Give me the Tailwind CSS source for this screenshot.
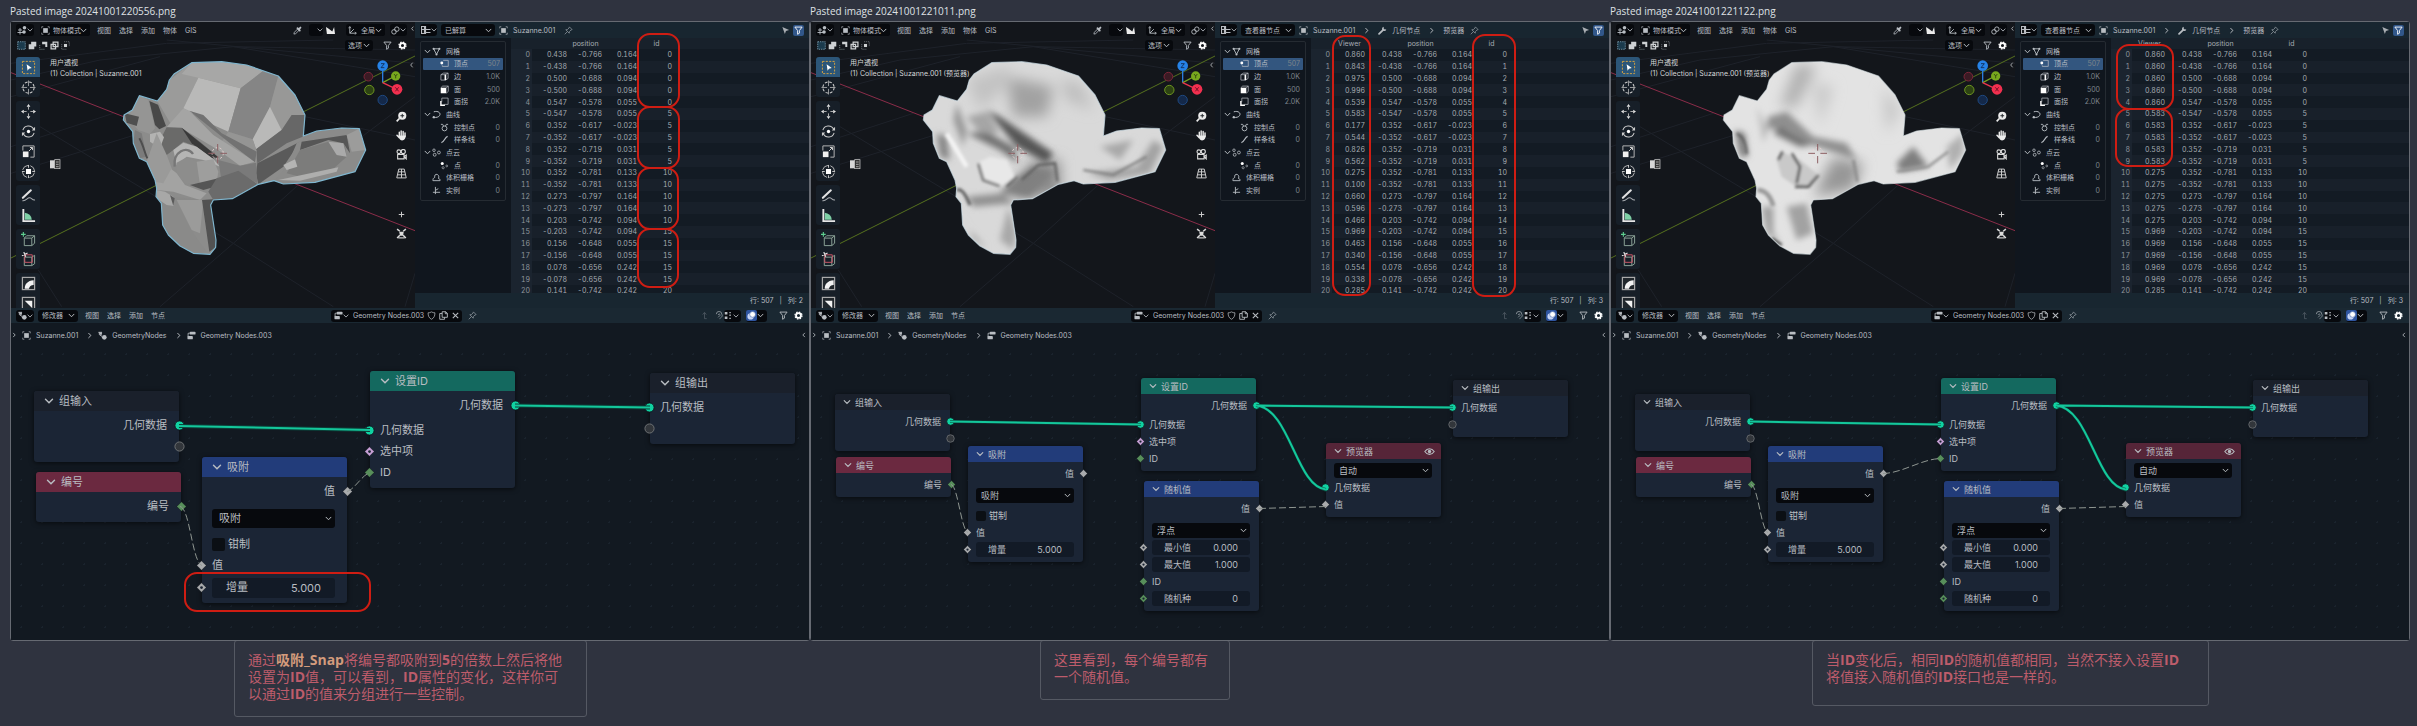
<!DOCTYPE html>
<html lang="zh-CN">
<head>
<meta charset="utf-8">
<title>Canvas</title>
<script src="https://cdn.jsdelivr.net/npm/@tailwindcss/browser@4"></script>
</head>
<body class="min-h-screen overflow-x-hidden bg-[#2f333f] font-['Inter','Noto_Sans_CJK_SC',sans-serif] text-[#b9bec4]">

<svg class="absolute size-0" aria-hidden="true">
  <defs>
    <symbol id="chev" viewBox="0 0 10 10"><path d="M1.5 3.2 5 6.8l3.500-3.600" fill="none" stroke="currentColor" stroke-width="1.400" stroke-linecap="round"/></symbol>
    <symbol id="right" viewBox="0 0 10 10"><path d="M3.500 1.500 7 5 3.500 8.500" fill="none" stroke="currentColor" stroke-width="1.400"/></symbol>
    <symbol id="left" viewBox="0 0 10 10"><path d="M6.500 1.500 3 5l3.500 3.500" fill="none" stroke="currentColor" stroke-width="1.400"/></symbol>
    <symbol id="obj" viewBox="0 0 10 10"><rect x="2.400" y="2.400" width="5.200" height="5.200" fill="currentColor"/><path d="M.8 2.600V.8h1.800M7.400.8h1.800v1.800M9.200 7.400v1.800H7.400M2.600 9.200H.8V7.400" fill="none" stroke="currentColor" stroke-width=".7"/></symbol>
    <symbol id="view3d" viewBox="0 0 10 10"><path d="M.5 7.500h6M3 9.500V3M1 5h4" stroke="currentColor" stroke-width=".9"/><circle cx="7.500" cy="2.800" r="1.800" fill="currentColor"/><circle cx="7" cy="7" r="1.800" fill="currentColor"/></symbol>
    <symbol id="sheet" viewBox="0 0 10 10"><path d="M.5 1.500h3v7h-3zM.5 4.500h9M4.500 1v8M4.500 7.500h5" fill="none" stroke="currentColor" stroke-width="1.200"/></symbol>
    <symbol id="mod" viewBox="0 0 10 10"><path d="M.5 1.500h4M1.500 1.500v2.500l3 2" fill="none" stroke="currentColor" stroke-width="1.100"/><circle cx="3.200" cy="3" r="1.300" fill="currentColor"/><circle cx="7" cy="7" r="2.600" fill="currentColor"/></symbol>
    <symbol id="nodes" viewBox="0 0 10 10"><rect x="3" y=".8" width="6.500" height="3.200" rx="1" fill="currentColor"/><rect x=".5" y="5.500" width="6" height="3.800" rx="1" fill="currentColor"/><path d="M3 2.500H1.200v4" fill="none" stroke="currentColor" stroke-width=".9"/></symbol>
    <symbol id="pin" viewBox="0 0 10 10"><path d="M6 1l3 3-1.200.4L6 6.200l-.2 1.800L2 4.200l1.800-.2 1.800-1.800zM3.800 6.200.8 9.200" fill="none" stroke="currentColor" stroke-width=".9"/></symbol>
    <symbol id="funnel" viewBox="0 0 10 10"><path d="M1 1.200h8L6 5v3L4 9.200V5z" fill="none" stroke="currentColor" stroke-width="1" stroke-linejoin="round"/></symbol>
    <symbol id="gear" viewBox="0 0 10 10"><circle cx="5" cy="5" r="2.700" fill="none" stroke="currentColor" stroke-width="2"/><circle cx="5" cy="5" r="3.900" fill="none" stroke="currentColor" stroke-width="1.400" stroke-dasharray="1.600 1.460"/></symbol>
    <symbol id="shield" viewBox="0 0 10 10"><path d="M5 1c1.300.8 2.500 1 3.800 1 0 3.500-1 5.800-3.800 7.200C2.200 7.800 1.200 5.500 1.200 2 2.500 2 3.700 1.800 5 1z" fill="none" stroke="currentColor" stroke-width=".8"/></symbol>
    <symbol id="copy" viewBox="0 0 10 10"><path d="M3.500.8h4l1.800 1.800v4.400H3.500zM3.500 2.800H.8v6.400h5.400V7" fill="none" stroke="currentColor" stroke-width="1"/><path d="M7 .8v2.200h2.300" fill="none" stroke="currentColor"/></symbol>
    <symbol id="x" viewBox="0 0 10 10"><path d="M2 2l6 6M8 2 2 8" stroke="currentColor" stroke-width="1.200"/></symbol>
    <symbol id="eye" viewBox="0 0 12 10"><path d="M.8 5C3.500.8 8.500.8 11.200 5 8.500 9.200 3.500 9.200.8 5z" fill="none" stroke="currentColor" stroke-width="1.200"/><circle cx="6" cy="5" r="1.900" fill="currentColor"/></symbol>
    <symbol id="wrench" viewBox="0 0 10 10"><path d="M1.200 8.800 5.500 4.500" stroke="currentColor" stroke-width="2" stroke-linecap="round"/><path d="M9.200 3.500A2.400 2.400 0 1 1 6.500.8L6.200 2.500l1.300 1.300z" fill="currentColor"/></symbol>
    <symbol id="cursor" viewBox="0 0 10 10"><path d="M1.500 1 9 4.500 5.500 5.600 4.300 9z" fill="currentColor"/></symbol>
    <symbol id="drop" viewBox="0 0 10 10"><path d="M1 9l.5-2L5.500 3l1.500 1.500L3 8.500z" fill="none" stroke="currentColor" stroke-width=".9"/><path d="M5 2.500 7.500 5M6.300 3.700 8.300 1.700" stroke="currentColor" stroke-width="2" stroke-linecap="round"/></symbol>
    <symbol id="axes" viewBox="0 0 10 10"><path d="M2 .8V8h7M2 8l4.500-4.500" fill="none" stroke="currentColor" stroke-width="1"/><path d="M.6 2.500 2 .6l1.400 1.900M7.500 6.600 9.400 8 7.500 9.400" fill="none" stroke="currentColor" stroke-width=".8"/></symbol>
    <symbol id="link" viewBox="0 0 10 10"><circle cx="3.300" cy="6.500" r="2.500" fill="none" stroke="currentColor"/><circle cx="6.500" cy="3.500" r="2.500" fill="none" stroke="currentColor"/></symbol>
    <symbol id="magnet" viewBox="0 0 10 10"><path d="M1.500 3.500a3 3 0 0 1 6 0c1.500 2-.5 4-2.500 5M3.500 4.500C4 2.500 6 3 5.500 5L3.500 7" fill="none" stroke="currentColor" stroke-width="1"/></symbol>
    <symbol id="snap" viewBox="0 0 10 10"><path d="M.8 1h3v3h-3zM.8 6h3v3h-3z" fill="currentColor"/><path d="M6 1h1.500v1.500H6zM6 4h1.500v1.500H6zM6 7.500h1.500V9H6z" fill="currentColor"/></symbol>
    <symbol id="overlay" viewBox="0 0 10 10"><circle cx="4" cy="6" r="3.500" fill="currentColor"/><circle cx="6.200" cy="3.800" r="3.200" fill="#fff" stroke="#4a6bb0" stroke-width=".7"/></symbol>
    <symbol id="up" viewBox="0 0 10 10"><path d="M3 4l2-2.500L7 4M5 2v6.500h2.500" fill="none" stroke="currentColor" stroke-width=".8"/></symbol>

    <symbol id="s1" viewBox="0 0 10 10"><rect x=".8" y=".8" width="8.400" height="8.400" fill="#1b3a4c" stroke="#8fb7cc" stroke-width=".8" stroke-dasharray="1.500 1"/></symbol>
    <symbol id="s2" viewBox="0 0 10 10"><path d="M3.500.8h5.700v5.400H7v3H.8V3.500h2.700z" fill="#cfd2d4"/></symbol>
    <symbol id="s3" viewBox="0 0 10 10"><path d="M3.500.8h5.700v6H7V3.500H3.500z" fill="#cfd2d4"/><path d="M.8 4.500v4.700H6" fill="none" stroke="#9aa" stroke-width=".8" stroke-dasharray="1.200 1"/></symbol>
    <symbol id="s4" viewBox="0 0 10 10"><path d="M3.500 1.200h5.300v5H3.500zM1.200 3.700h5v5h-5z" fill="none" stroke="#cfd2d4" stroke-width="1.400"/></symbol>
    <symbol id="s5" viewBox="0 0 10 10"><rect x="3.300" y="3.300" width="3.400" height="3.400" fill="#cfd2d4"/><path d="M3.500.8h5.700v5.400M.8 3.500v5.700h5.700" fill="none" stroke="#8a9096" stroke-width=".8" stroke-dasharray="1.200 1"/></symbol>

    <symbol id="t0" viewBox="0 0 16 16"><rect x="1.500" y="1.500" width="13" height="13" fill="none" stroke="#d9a441" stroke-dasharray="2.200 1.400"/><path d="M6 4.500l5.500 4-3 .8L7 11.500z" fill="#fff"/></symbol>
    <symbol id="t1" viewBox="0 0 16 16"><circle cx="8" cy="8" r="6" fill="none" stroke="#ccc" stroke-width="1.100" stroke-dasharray="3 1.700"/><path d="M8 .5v6M8 9.500v6M.5 8h6M9.500 8h6" stroke="#bdbdbd" stroke-width=".8"/></symbol>
    <symbol id="t2" viewBox="0 0 16 16"><path d="M8 0l2 3H6zM8 16l2-3H6zM0 8l3-2v4zM16 8l-3-2v4z" fill="#e4e4e4"/><path d="M8 3v3M8 10v3M3 8h3M10 8h3" stroke="#b5b5b5"/></symbol>
    <symbol id="t3" viewBox="0 0 16 16"><path d="M2 6.500A6.200 6.200 0 0 1 13.500 5.500M14 9.500A6.200 6.200 0 0 1 2.500 10.500" fill="none" stroke="#ccc" stroke-width="1.100"/><path d="M15 3v4h-3.500zM1 13V9h3.500z" fill="#ccc"/><circle cx="8" cy="8" r="1.800" fill="#fff"/></symbol>
    <symbol id="t4" viewBox="0 0 16 16"><path d="M2 7V2h12v12h-4" fill="none" stroke="#bbb"/><rect x="2" y="8" width="6" height="6" fill="#f0f0f0"/><path d="M8.500 7.500 12 4M9.500 3.700H12.300V6.500" fill="none" stroke="#ddd"/></symbol>
    <symbol id="t5" viewBox="0 0 16 16"><circle cx="8" cy="8" r="6.500" fill="none" stroke="#bbb" stroke-dasharray="7.500 2.700" stroke-dashoffset="-1.300"/><rect x="5.300" y="5.300" width="5.400" height="5.400" fill="#fff"/><path d="M8 1v3M8 12v3M1 8h3M12 8h3" stroke="#ccc"/></symbol>
    <symbol id="t6" viewBox="0 0 16 16"><path d="M2 10.500 10.500 2.500" stroke="#e2e2e2" stroke-width="2.200" stroke-linecap="round"/><path d="M1.500 13.500c4 1 5-3.500 8-3 2.500.4 2 2.500 5.500 2.200" fill="none" stroke="#a9adb2" stroke-width="1.100"/></symbol>
    <symbol id="t7" viewBox="0 0 16 16"><path d="M2.500 1v13H15" fill="none" stroke="#e6e6e6" stroke-width="2"/><path d="M4 5a8 8 0 0 1 7.500 7.500H4z" fill="#7fd0a6"/></symbol>
    <symbol id="t8" viewBox="0 0 16 16"><path d="M3.500 6.500h8v8h-8zM3.500 6.500 6 4h8.500v8L11.500 14.500M11.500 6.500 14.500 4" fill="none" stroke="#8fa79c"/><path d="M2.500 0v5M0 2.500h5" stroke="#5ecf8f" stroke-width="1.200"/></symbol>
    <symbol id="t9" viewBox="0 0 16 16"><path d="M3.500 5.500h8v9h-8zM11.500 5.500l3-2v9l-3 2" fill="none" stroke="#8fa79c"/><path d="M4 3h8v8H4z" fill="none" stroke="#d0596a"/><path d="M1 4l6-3M3 0l2 5" stroke="#ddd" stroke-width="1.300"/></symbol>
    <symbol id="t10" viewBox="0 0 16 16"><rect x="1.500" y="1.500" width="13" height="13" fill="#20262b" stroke="#aaa" stroke-width="1.300"/><path d="M4 13.500c0-5 3-8.500 9.500-9v5c-3 0-4.500 1.500-5 4z" fill="#f2f2f2"/></symbol>
    <symbol id="t11" viewBox="0 0 16 16"><rect x="1.500" y="1.500" width="13" height="16" fill="#20262b" stroke="#aaa" stroke-width="1.300"/><path d="M4 5h8v8z" fill="#f2f2f2"/></symbol>

    <symbol id="n0" viewBox="0 0 10 10"><circle cx="5.700" cy="4.300" r="3.700" fill="#ececec"/><path d="M.6 9.400 3 7" stroke="#ececec" stroke-width="1.500"/><path d="M4 4.300h3.400M5.700 2.600V6" stroke="#22262b" stroke-width=".9"/></symbol>
    <symbol id="n1" viewBox="0 0 10 10"><path d="M3 5.500V2M4.700 5V.9M6.500 5V1.300M8.200 6V2.600M.9 4.700 3 7" stroke="#ececec" stroke-width="1.300" stroke-linecap="round"/><path d="M2.400 5h6.400c0 2.500-1 4.500-3.300 4.500C3.500 9.500 2.400 7 2.400 5z" fill="#ececec"/></symbol>
    <symbol id="n2" viewBox="0 0 10 10"><circle cx="2.600" cy="2.500" r="1.700" fill="none" stroke="#ddd"/><circle cx="6.600" cy="2.300" r="1.900" fill="none" stroke="#ddd"/><path d="M1.500 5h5.800v4H1.500zM7.300 7l2-1.500v3.500z" fill="none" stroke="#ddd"/></symbol>
    <symbol id="n3" viewBox="0 0 10 10"><path d="M2.500 1h5l1.800 8H.7zM5 1v8M1.900 3.500h6.200M1.300 6.200h7.400" fill="none" stroke="#ccc" stroke-width=".9"/></symbol>
    <symbol id="n4" viewBox="0 0 10 10"><path d="M5 2.500v5M2.500 5h5" stroke="#ccc" stroke-width=".9"/></symbol>
    <symbol id="n5" viewBox="0 0 10 10"><path d="M1 1l2.500 2M9 1 6.500 3M1 9l2.500-2.500M9 9 6.500 6.500" stroke="#ddd" stroke-width="1.300"/><path d="M3 3.500h4L6.500 7h-3z" fill="#ddd"/><path d="M2 9h6" stroke="#ddd"/></symbol>

    <symbol id="mesh" viewBox="0 0 10 10"><path d="M1.800 2h6.400L5 8.200z" fill="none" stroke="currentColor" stroke-width="1"/><circle cx="1.800" cy="2" r="1.200" fill="currentColor"/><circle cx="8.200" cy="2" r="1.200" fill="currentColor"/><circle cx="5" cy="8.300" r="1.200" fill="currentColor"/></symbol>
    <symbol id="vert" viewBox="0 0 10 10"><path d="M3.500 1.500h5.700v6.700H2.500V7" fill="none" stroke="currentColor" stroke-width=".8"/><circle cx="2" cy="4.500" r="1.600" fill="#fff"/></symbol>
    <symbol id="edge" viewBox="0 0 10 10"><path d="M1 3h5v6H1zM6 3l3-1.800v6L6 9M1 3l3-1.800h5" fill="none" stroke="currentColor" stroke-width=".8"/><path d="M6 3v6" stroke="#fff" stroke-width="1.800"/></symbol>
    <symbol id="face" viewBox="0 0 10 10"><path d="M7 3l2.200-1.800v6L7 9M1 3l2-1.800h6" fill="none" stroke="currentColor" stroke-width=".8"/><path d="M.8 3H7v6.200H.8z" fill="#fff"/></symbol>
    <symbol id="corner" viewBox="0 0 10 10"><path d="M2 1.200h7v7H5M2 1.200v4" fill="none" stroke="currentColor" stroke-width=".8"/><path d="M1 4.500v4.700h4.500" fill="none" stroke="#fff" stroke-width="1.600"/></symbol>
    <symbol id="curve" viewBox="0 0 10 10"><path d="M2 2c5-1.500 8 1.500 6.500 4S5 8 2 8.500" fill="none" stroke="currentColor" stroke-width="1.100"/><circle cx="2" cy="8" r="1.300" fill="currentColor"/></symbol>
    <symbol id="ctrl" viewBox="0 0 10 10"><circle cx="5" cy="6" r="2.700" fill="none" stroke="currentColor"/><path d="M1 1.500h2l1 2M9 1.500H7l-1 2" fill="none" stroke="currentColor"/></symbol>
    <symbol id="spline" viewBox="0 0 10 10"><path d="M1.500 8.500c3 0 4-6.500 7-7" fill="none" stroke="currentColor" stroke-width="1.400"/></symbol>
    <symbol id="cloud" viewBox="0 0 10 10"><g fill="none" stroke="currentColor" stroke-width=".9"><circle cx="2.200" cy="2.500" r="1.400"/><circle cx="3" cy="7.500" r="1.600"/><circle cx="7.700" cy="5" r="1.600"/></g></symbol>
    <symbol id="point" viewBox="0 0 10 10"><circle cx="2.500" cy="2.700" r="1.700" fill="#fff"/><circle cx="3.500" cy="7.500" r="1.200" fill="none" stroke="currentColor" stroke-width=".7"/><circle cx="7.500" cy="5.500" r="1" fill="none" stroke="currentColor" stroke-width=".7"/></symbol>
    <symbol id="vol" viewBox="0 0 10 10"><path d="M1 8.500h8c0-2-1-2.300-1.800-2.300C8.500 3.500 6.500 1 4.500 1.500 2.500 2 3 4.500 3 5 1.500 5.500 1 6.500 1 8.500z" fill="none" stroke="currentColor" stroke-width="1"/></symbol>
    <symbol id="inst" viewBox="0 0 10 10"><path d="M3.800 1v8M1 7h8M3.800 4.800 7 3" stroke="currentColor" stroke-width="1"/></symbol>

    <clipPath id="sil"><path d="M472 303 500 268 508 240 522 222 575 188 665 185 740 195 835 228 885 285 915 345 910 408 950 393 1025 384 1078 386 1097 450 1065 515 945 547 850 552 822 542 775 553 697 596 640 600 632 615 648 720 647 742 630 763 580 760 540 738 505 705 488 675 484 610 468 590 470 565 465 540 440 485 418 475 400 430 398 395 370 360 372 345 397 330 418 287Z"/></clipPath>
    <filter id="soft"><feGaussianBlur stdDeviation="9"/></filter>
    <filter id="softer"><feGaussianBlur stdDeviation="20"/></filter>
    <filter id="fine"><feGaussianBlur stdDeviation="4"/></filter>

    <g id="flat">
      <g clip-path="url(#sil)">
        <path d="M360 180h750v590H360z" fill="#8c8c8b"/>
        <path d="M508 240 575 188 665 185 595 233 550 325 520 385 472 303z" fill="#9b9b9a"/>
        <path d="M575 188 665 185 740 195 790 212 722 265 595 233 545 222z" fill="#a7a7a6"/>
        <path d="M595 233 722 265 685 395 640 375 550 325z" fill="#b9b9b8"/>
        <path d="M722 265 790 212 835 228 810 320 758 418 685 395z" fill="#858585"/>
        <path d="M835 228 885 285 915 345 875 345 845 390 810 320z" fill="#989897"/>
        <path d="M810 320 845 390 768 448 758 418z" fill="#b9b9b8"/>
        <path d="M875 345 915 345 908 410 860 430 772 490 768 448 845 390z" fill="#676767"/>
        <path d="M772 490 900 425 850 500 775 553 768 520z" fill="#5a5a5a"/>
        <path d="M685 395 758 418 770 452 768 490 655 440z" fill="#959594"/>
        <path d="M550 325 568 332 640 405 765 485 720 497 655 450 545 385 500 382z" fill="#a5a5a4"/>
        <path d="M568 332 610 345 665 400 770 455 765 487 690 430z" fill="#727272"/>
        <path d="M500 382 545 383 600 425 655 472 640 477 590 440 550 425 520 450 500 465 470 440z" fill="#6a6a69"/>
        <path d="M545 383 655 472 635 474 575 430z" fill="#393939"/>
        <path d="M450 402 480 395 492 412 480 445 450 425z" fill="#b3b3b2"/>
        <path d="M520 450 550 428 590 440 640 477 660 500 610 480 560 470 530 495z" fill="#b5b5b4"/>
        <path d="M524 500c-6-45 38-65 55-38" fill="none" stroke="#777" stroke-width="7"/>
        <path d="M530 488 560 472 590 485 600 520 590 555 555 550 530 520z" fill="#8d8d8c"/>
        <path d="M590 485 640 478 655 515 650 545 600 555z" fill="#9e9e9d"/>
        <path d="M655 480 720 497 768 488 772 550 715 515 665 545z" fill="#7a7a7a"/>
        <path d="M570 555 655 535 640 562 610 570z" fill="#555"/>
        <path d="M650 535 715 512 772 552 697 596 640 600 625 575z" fill="#6b6b6b"/>
        <path d="M465 540 505 500 530 520 555 555 620 580 600 600 520 575 470 570z" fill="#a3a3a2"/>
        <path d="M470 400 500 465 515 505 490 550 465 545 440 485z" fill="#9a9a99"/>
        <path d="M372 345 397 330 418 287 445 300 465 385 450 402 415 390z" fill="#959594"/>
        <path d="M448 303 474 314 498 378 478 388 465 375z" fill="#484848"/>
        <path d="M374 340 417 350 410 378 380 368z" fill="#4f4f4f"/>
        <path d="M405 390 425 400 440 470 418 475 400 430z" fill="#7b7b7b"/>
        <path d="M418 415c12 20 15 42 24 60" fill="none" stroke="#4e4e4e" stroke-width="6"/>
        <path d="M484 610 520 590 605 600 575 640 580 700 620 755 580 760 540 738 505 705 488 675z" fill="#8a8a89"/>
        <path d="M530 600 610 600 600 700 575 690z" fill="#9b9b9a"/>
        <path d="M606 600 640 598 632 615 648 720 647 742 628 755z" fill="#525252"/>
        <path d="M468 570 495 575 520 590 522 618 500 615 470 595z" fill="#a8a8a7"/>
        <path d="M510 585 524 595 520 618z" fill="#5c5c5c"/>
        <path d="M890 430 950 393 1078 386 1097 450 1065 515 945 547 850 552 822 542 860 500z" fill="#8b8b8a"/>
        <path d="M905 425 1040 405 1050 460 1030 430 985 420 900 450z" fill="#565656"/>
        <path d="M900 450 985 425 1035 435 1040 470 990 515 900 530 860 520z" fill="#7c7c7b"/>
        <path d="M985 425 1030 430 1040 470 1010 465z" fill="#aaa"/>
        <path d="M850 495 885 478 892 500 860 510z" fill="#b4b4b3"/>
        <path d="M835 540 1015 502 1010 515 900 542z" fill="#aeaead"/>
        <path d="M1040 405 1078 386 1097 450 1055 455z" fill="#9c9c9b"/>
      </g>
      <use href="#outline" stroke="#7fb6cf"/>
    </g>
    <path id="outline" fill="none" stroke-width="3.500" stroke-linejoin="round" d="M472 303 500 268 508 240 522 222 575 188 665 185 740 195 835 228 885 285 915 345 910 408 950 393 1025 384 1078 386 1097 450 1065 515 945 547 850 552 822 542 775 553 697 596 640 600 632 615 648 720 647 742 630 763 580 760 540 738 505 705 488 675 484 610 468 590 470 565 465 540 440 485 418 475 400 430 398 395 370 360 372 345 397 330 418 287Z"/>
    <g id="smoothA">
      <g clip-path="url(#sil)">
        <path d="M360 180h750v590H360z" fill="#d9d9d9"/>
        <g filter="url(#softer)"><path d="M620 230 760 260 740 350 640 350z" fill="#a2a2a2"/><path d="M500 240 620 200 640 240 540 330z" fill="#c2c2c2"/><path d="M700 480h80v110h-160z" fill="#8b8b8b"/><path d="M780 240 840 250 880 330 800 300z" fill="#bdbdbd"/></g>
        <g filter="url(#soft)">
          <path d="M560 330 600 350 760 460 740 490 650 440z" fill="#555"/><path d="M500 400 560 395 640 440 655 490 600 450z" fill="#707070"/><path d="M500 350 560 335 600 400 540 400z" fill="#a5a5a5"/>
          <path d="M640 540 700 500 760 520 690 590 600 580z" fill="#808080"/><path d="M500 590 610 580 640 610 520 620z" fill="#909090"/><path d="M485 620 510 690 560 745 520 720z" fill="#a5a5a5"/><path d="M625 620 650 700 640 750 600 720z" fill="#a8a8a8"/>
          <path d="M410 400 440 410 450 480 420 470z" fill="#858585"/><path d="M470 310 500 390 490 440 460 360z" fill="#999"/><path d="M900 440 1000 420 960 480z" fill="#a8a8a8"/><path d="M860 520 1010 500 1060 420 1090 440 1050 520 930 540z" fill="#a3a3a3"/>
        </g>
        <g filter="url(#fine)"><path d="M530 490 570 470 620 480 645 530 600 560 550 540z" fill="#e8e8e8"/><path d="M620 560 650 530M665 540 715 495 765 490 772 545M535 490 550 540 600 558" fill="none" stroke="#5c5c5c" stroke-width="7"/><path d="M470 570c15-5 25 10 40 45" fill="none" stroke="#4c4c4c" stroke-width="8"/><path d="M440 400 500 500" stroke="#f4f4f4" stroke-width="14"/><path d="M850 510 940 525 1040 470" fill="none" stroke="#777" stroke-width="6"/></g>
      </g>
      <use href="#outline" stroke="#cfe0e8" stroke-opacity=".7"/>
    </g>
    <g id="smoothB">
      <g clip-path="url(#sil)">
        <path d="M360 180h750v590H360z" fill="#e3e3e3"/>
        <g filter="url(#softer)"><path d="M590 190 650 200 590 320 540 320z" fill="#b0b0b0"/><path d="M640 250 700 260 660 380z" fill="#c8c8c8"/><path d="M700 470 790 490 760 570 640 590z" fill="#969696"/><path d="M850 260 900 330 860 400z" fill="#c4c4c4"/></g>
        <g filter="url(#soft)">
          <path d="M505 350 560 335 640 410 740 430 770 480 650 440 560 390 500 385z" fill="#8f8f8f"/><path d="M540 380 640 435 600 440 520 400z" fill="#707070"/>
          <path d="M405 390 435 400 445 470 420 470z" fill="#7a7a7a"/><path d="M470 320 505 390 490 430z" fill="#bbb"/><path d="M560 620 620 610 640 700 590 720z" fill="#a2a2a2"/><path d="M485 620 520 620 520 700 545 735 500 700z" fill="#a0a0a0"/>
          <path d="M890 490 940 440 985 500 900 515z" fill="#7e7e7e"/><path d="M1040 440 1090 400 1090 460 1050 510z" fill="#b0b0b0"/>
        </g>
        <g filter="url(#fine)"><path d="M530 480 545 455 600 480 650 520 640 550 590 560 545 530z" fill="#c9c9c9"/><path d="M535 480 548 455M575 460 600 500 590 550M585 560 625 560 655 525" fill="none" stroke="#4e4e4e" stroke-width="8"/><path d="M760 480 772 545" stroke="#888" stroke-width="8"/><path d="M472 570c25 0 40 20 48 48" fill="none" stroke="#999" stroke-width="14"/><path d="M515 715 545 735" stroke="#444" stroke-width="8"/><path d="M410 400c22 10 28 35 30 62" fill="none" stroke="#555" stroke-width="6"/><path d="M890 515 985 500 1045 455" fill="none" stroke="#8b8b8b" stroke-width="7"/></g>
      </g>
      <use href="#outline" stroke="#dce6ea" stroke-opacity=".6"/>
    </g>
  </defs>
</svg>

<main id="board" class="grid grid-cols-3 pl-[10px] pr-[7px]"></main>

<script>
const ic = (id, cls = 'size-[9px]') => `<svg class="${cls} shrink-0" aria-hidden="true"><use href="#${id}"/></svg>`;

/* drop-down with its own chevron */
const pick = (name, text, box, inner) => `
  <span class="${box} relative flex items-center rounded-[3px] bg-[#07090d]">
    <select aria-label="${name}" class="${inner} w-full appearance-none bg-transparent leading-none text-[#b9bdc2] outline-none"><option>${text}</option></select>
    <svg class="pointer-events-none absolute right-[3px] size-[7px]" aria-hidden="true"><use href="#chev"/></svg>
  </span>`;

const tinyBtn = (icon, label, cls = '') => `<button aria-label="${label}" class="${cls} flex items-center justify-center">${ic(icon)}</button>`;

/* ---- 3D viewport ---- */
const viewport = p => `
<section aria-label="3D 视图" class="relative h-[286px] w-[404px] shrink-0 overflow-hidden bg-[#13161b]">
  <svg class="absolute inset-0 h-full w-full" viewBox="33 66 1212 858" preserveAspectRatio="xMinYMin slice">
    <g stroke="#1e222a" stroke-width="3" fill="none">
      <path d="M33 440 340 340M33 520 420 400M120 380 700 730 1000 920M480 920 700 730 900 550 1245 290M33 240 300 180 700 140 1245 150M33 190 500 130 1000 120M33 290 480 170M700 140 1245 230M500 120 1245 190M915 350 1245 420M115 810 185 920M1245 820 1215 920"/>
    </g>
    <path d="M33 218 1245 692" stroke="#8b2c49" stroke-width="3"/>
    <path d="M33 774 1245 168" stroke="#56701f" stroke-width="3"/>
    <use href="#${p.head}"/>
    <g stroke-width="3" fill="none"><circle cx="653" cy="460" r="17" stroke="#e9d4d4" stroke-dasharray="6 6"/><path d="M653 432v20M653 468v22M625 460h20M661 460h20" stroke="#8c5f63"/></g>
    <g>
      <path d="M1148 248V212" stroke="#2b7de0" stroke-width="4"/><path d="M1148 248l32-17" stroke="#7aa51f" stroke-width="4"/><path d="M1148 248l36 17" stroke="#ee3450" stroke-width="4"/>
      <circle cx="1105" cy="230" r="13" fill="#3b1a24" stroke="#7b2638" stroke-width="3"/><circle cx="1108" cy="270" r="14" fill="#2d4213" stroke="#6d9420" stroke-width="3"/><circle cx="1148" cy="300" r="14" fill="#14294a" stroke="#1f4880" stroke-width="3"/>
      <circle cx="1148" cy="197" r="16" fill="#2682e6"/><circle cx="1187" cy="228" r="14" fill="#78a81e"/><circle cx="1191" cy="268" r="16" fill="#f2304f"/>
      <path d="M1143 191h10l-10 12h10" fill="none" stroke="#10284a" stroke-width="2.500"/><path d="M1182 222l5 6 5-6M1187 228v7" fill="none" stroke="#2b400c" stroke-width="2.500"/><path d="M1186 262l10 12M1196 262l-10 12" stroke="#5c0d1c" stroke-width="2.500"/>
    </g>
    <g><rect x="150" y="481" width="14" height="24" fill="#d7d7d7"/><rect x="164" y="479" width="16" height="27" fill="#333" stroke="#d7d7d7" stroke-width="2"/><path d="M168 486h8M168 493h8M168 500h8" stroke="#d7d7d7" stroke-width="2"/></g>
    <path d="M1238 188l-6 7 6 7M1240 80l-5 6 5 6" fill="none" stroke="#a0a4a8" stroke-width="3"/>
  </svg>

  <div class="relative flex h-full flex-col text-[7px] leading-none">
    <div class="flex h-4 items-center pl-[5px] pr-[8px]">
      <button aria-label="编辑器类型" class="flex h-[12px] w-[18px] items-center justify-center rounded-[3px] bg-[#07090d]">${ic('view3d', 'size-[10px]')}${ic('chev', 'size-[6px]')}</button>
      <span class="ml-[6px] flex items-center rounded-[3px] bg-[#07090d] pl-px">${ic('obj')}${pick('模式', '物体模式', 'h-[12px] w-[40px]', 'pl-[3px]')}</span>
      <nav class="ml-[7px] flex gap-[8px]"><button>视图</button><button>选择</button><button>添加</button><button>物体</button><button>GIS</button></nav>
      <div class="ml-auto flex items-center">
        ${tinyBtn('drop', '吸管')}
        <span class="ml-[7px] flex h-[12px] w-[14px] items-center justify-end rounded-[3px] bg-[#07090d]">${ic('chev', 'size-[6px]')}</span>
        <svg class="ml-[3px] size-[9px]" viewBox="0 0 10 10"><path d="M0 1l3 2 4 3 2-5 1 8H1z" fill="#ececec"/></svg>
        <span class="ml-[11px] flex items-center rounded-[3px] bg-[#07090d] pl-[2px]">${ic('axes')}${pick('坐标系', '全局', 'h-[12px] w-[28px]', 'pl-[4px]')}</span>
        <button aria-label="轴心点" class="ml-[5px] flex h-[12px] w-[17px] items-center justify-center rounded-[3px] bg-[#07090d]">${ic('link')}${ic('chev', 'size-[6px]')}</button>
      </div>
    </div>
    <div class="flex h-[14px] items-center gap-[2px] pl-[6px] pr-[8px]">
      ${['s1','s2','s3','s4','s5'].map((s, i) => tinyBtn(s, '选择模式 ' + (i + 1))).join('')}
      <span class="ml-auto">${pick('选项', '选项', 'h-[11px] w-[28px]', 'pl-[3px]')}</span>
      <span class="ml-[8px] flex gap-[6px]">${tinyBtn('funnel', '筛选')}${tinyBtn('gear', '设置', 'text-white')}</span>
    </div>
    <div class="flex min-h-0 flex-1 pl-[5px] pt-[5px]">
      <div class="flex w-6 shrink-0 flex-col gap-[4px]">
        ${[[0,1],[2,3,4,5],[6,7],[8,9],[10,11]].map(g => `<div class="flex shrink-0 flex-col overflow-hidden rounded-[3px] bg-[#171f28]">${g.map(t =>
          `<button aria-label="工具 ${t + 1}" class="${t ? 'bg-transparent' : 'bg-[#2c5678]'} flex h-5 items-center justify-center">${ic('t' + t, 'size-[15px]')}</button>`).join('')}</div>`).join('')}
      </div>
      <div class="ml-[10px] mt-[2px] flex flex-col gap-[4px] whitespace-nowrap text-[#d5d7d9]"><p>用户透视</p><p>${p.caption}</p></div>
      <div class="ml-auto mt-[54px] flex flex-col gap-[8px] pr-[8px]">
        ${[0,1,2,3].map(i => `<button aria-label="导航 ${i + 1}" class="size-[11px]">${ic('n' + i, 'size-[11px]')}</button>`).join('')}
        <span class="mt-[22px] flex flex-col gap-[8px]">${ic('n4', 'size-[11px]')}${ic('n5', 'size-[11px]')}</span>
      </div>
    </div>
  </div>
</section>`;

/* ---- spreadsheet ---- */
const tree = [
  [0, 'mesh', '网格', ''], [1, 'vert', '顶点', '507'], [1, 'edge', '边', '1.0K'], [1, 'face', '面', '500'], [1, 'corner', '面拐', '2.0K'],
  [0, 'curve', '曲线', ''], [1, 'ctrl', '控制点', '0'], [1, 'spline', '样条线', '0'], [0, 'cloud', '点云', ''], [1, 'point', '点', '0'],
  [2, 'vol', '体积栅格', '0'], [2, 'inst', '实例', '0']];
const pos = [
  ['0.438','-0.766','0.164'],['-0.438','-0.766','0.164'],['0.500','-0.688','0.094'],['-0.500','-0.688','0.094'],['0.547','-0.578','0.055'],
  ['-0.547','-0.578','0.055'],['0.352','-0.617','-0.023'],['-0.352','-0.617','-0.023'],['0.352','-0.719','0.031'],['-0.352','-0.719','0.031'],
  ['0.352','-0.781','0.133'],['-0.352','-0.781','0.133'],['0.273','-0.797','0.164'],['-0.273','-0.797','0.164'],['0.203','-0.742','0.094'],
  ['-0.203','-0.742','0.094'],['0.156','-0.648','0.055'],['-0.156','-0.648','0.055'],['0.078','-0.656','0.242'],['-0.078','-0.656','0.242'],['0.141','-0.742','0.242']];

const sheet = p => `
<section aria-label="电子表格" class="flex h-[286px] min-w-0 flex-1 flex-col bg-[#10161e] text-[7px] leading-none">
  <div class="flex h-4 shrink-0 items-center bg-[#182630] pl-[5px] pr-[5px] text-[#b9bdc2]">
    <button aria-label="编辑器类型" class="flex h-[12px] w-[17px] items-center justify-center rounded-[3px] bg-[#07090d]">${ic('sheet', 'size-[10px]')}${ic('chev', 'size-[6px]')}</button>
    ${pick('求值状态', p.state, 'ml-[4px] h-[12px] w-[54px]', 'pl-[4px]')}
    <span class="ml-[4px] flex items-center gap-[5px]">${ic('obj')}Suzanne.001</span>
    ${p.viewer ? `<span class="ml-[8px] flex items-center gap-[8px]">${ic('right', 'size-[7px]')}<span class="flex items-center gap-[5px]">${ic('wrench')}几何节点</span>${ic('right', 'size-[7px]')}预览器</span>` : ''}
    <button aria-label="固定" class="${p.viewer ? 'ml-[6px]' : 'ml-[9px]'} text-[#8a9299]">${ic('pin')}</button>
    <span class="ml-auto flex items-center gap-[3px]">${tinyBtn('cursor', '仅选中', 'text-[#a9aeb3]')}${tinyBtn('funnel', '筛选', 'size-[11px] rounded-[2px] bg-[#31578a] text-white')}</span>
  </div>
  <div class="flex h-[255px] shrink-0 overflow-hidden">
    <div class="w-[96px] shrink-0 pl-[5px] pt-[3px]">
      <ul class="grid h-[160px] w-[86px] grid-rows-12 rounded-[2px] border border-[#252b32] px-[2px] py-[3px]">
        ${tree.map(([lv, icon, name, n], i) => `<li class="${i === 1 ? 'bg-[#33567f]' : 'bg-transparent'} ${lv === 1 ? 'pl-[17px]' : lv === 2 ? 'pl-[9px]' : 'pl-0'} flex items-center gap-[5px] rounded-[1px] pr-[3px]">${lv === 0 ? `<button aria-label="折叠" class="-mr-[4px] pl-px">${ic('chev', 'size-[7px]')}</button>` : ''}${ic(icon)}<span>${name}</span><span class="ml-auto text-[#7d848b]">${n}</span></li>`).join('')}
      </ul>
    </div>
    <div class="min-w-0 flex-1 bg-[#131b24]">
      <table class="h-[259px] w-full table-fixed border-collapse text-right tabular-nums text-[#a6acb2]">
        <colgroup><col class="w-[21px]">${p.viewer ? '<col class="w-[35px]">' : ''}<col class="w-[37px]"><col class="w-[35px]"><col class="w-[35px]"><col class="w-[35px]"><col></colgroup>
        <thead><tr class="h-[11px] bg-[#18212b] text-center"><th class="p-0"></th>${p.viewer ? '<th class="p-0 font-normal">Viewer</th>' : ''}<th colspan="3" class="p-0 font-normal">position</th><th class="p-0 font-normal">id</th><th class="p-0"></th></tr></thead>
        <tbody>${pos.map((r, i) => `<tr class="odd:bg-[#131b24] even:bg-[#18202a]"><td class="bg-[#1b242f] p-0 pr-[2px] text-[#8f969d]">${i}</td>${p.viewer ? `<td class="p-0 pr-[2px]">${p.viewer[i]}</td>` : ''}${r.map(v => `<td class="p-0 pr-[2px]">${v}</td>`).join('')}<td class="p-0 pr-[2px]">${p.ids(i)}</td><td class="p-0"></td></tr>`).join('')}</tbody>
      </table>
    </div>
  </div>
  <footer class="flex flex-1 items-center justify-end gap-[6px] bg-[#182630] pr-[6px]"><span>行: 507</span><span>|</span><span>列: ${p.cols}</span></footer>
</section>`;

/* ---- node editor ---- */
const big = {
  node: 'w-[145px] pb-[5px] text-[11px]', head: 'h-[20px] gap-[5px] pl-[10px] pr-[8px] mb-[4px]', row: 'h-[21px] pl-[10px] pr-[12px]', chev: 'size-[10px]', sock: 'size-[11px]',
  l: '-left-[6px]', r: '-right-[6px]', sel: 'h-[19px] w-full', selIn: 'pl-[7px]', field: 'h-[20px] px-[14px]', box: 'size-[13px]',
  g1: 'mt-[4px]', g2: 'mt-[6px]', g3: 'mt-[5px]', g4: 'mt-px', g0: '' };
const small = {
  node: 'w-[115px] pb-[4px] text-[9px]', head: 'h-[16px] gap-[4px] pl-[8px] pr-[6px] mb-[3px]', row: 'h-[17px] pl-[8px] pr-[9px]', chev: 'size-[8px]', sock: 'size-[9px]',
  l: '-left-[5px]', r: '-right-[5px]', sel: 'h-[15px] w-full', selIn: 'pl-[5px]', field: 'h-[15px] px-[12px]', box: 'size-[10px]',
  g1: 'mt-[2px]', g2: 'mt-[5px]', g3: 'mt-[3px]', g4: '', g0: '' };
const C = { geo: '#10d2a2', bool: '#c8a0d6', int: '#588f5b', val: '#a9abad', none: '#32363b' };
const socket = (S, kind, side) => {
  const [c, shape] = kind.split('-');
  const mark = shape === 'o' ? `<circle cx="6" cy="6" r="5" fill="${C[c]}" stroke="${c === 'none' ? '#74777a' : '#0f151c'}" stroke-width="1"/>`
    : `<path d="M6 .8 11.2 6 6 11.2.8 6z" fill="${C[c]}" stroke="#10161d" stroke-width=".6"/>${shape === 'dot' ? '<circle cx="6" cy="6" r="1.500" fill="#1a2331"/>' : ''}`;
  return `<svg class="${S.sock} ${side === 'l' ? S.l : S.r} absolute" viewBox="0 0 12 12">${mark}</svg>`;
};
const row = (S, r) => {
  const [type, text, sock, gap, val] = r;
  const g = S[gap || 'g0'];
  const wrap = (inner, extra = '') => `<div class="${S.row} ${g} ${extra} relative flex items-center">${inner}</div>`;
  if (type === 'out') return wrap(`<span>${text}</span>${socket(S, sock, 'r')}`, 'justify-end');
  if (type === 'in') return wrap(`<span>${text}</span>${socket(S, sock, 'l')}`);
  if (type === 'sel') return wrap(pick(text, text, S.sel, S.selIn));
  if (type === 'chk') return wrap(`<label class="flex items-center gap-[3px]"><input type="checkbox" class="${S.box} appearance-none rounded-[2px] bg-[#0b0f14]">${text}</label>`);
  return wrap(`<label class="${S.field} flex w-full min-w-0 items-center justify-between rounded-[3px] bg-[#121a26]"><span class="shrink-0">${text}</span><input value="${val}" class="w-1/2 min-w-0 bg-transparent text-right outline-none"></label>${socket(S, sock, 'l')}`);
};
const node = (S, [x, y, title, head, rows, eye]) => `
<article class="${S.node} absolute rounded-[3px] bg-[#1b2535] leading-none text-[#b9bdc2] shadow-[0_1px_5px_rgba(0,0,0,.6)]" style="left:${x - 11}px;top:${y - 323}px">
  <header class="${S.head} ${head} flex items-center rounded-t-[3px]"><button aria-label="折叠 ${title}">${ic('chev', S.chev)}</button><h3>${title}</h3>${eye ? `<button aria-label="预览" class="ml-auto">${ic('eye', 'h-[9px] w-[11px]')}</button>` : ''}</header>
  ${rows.map(r => row(S, r)).join('')}
</article>`;

const dark = 'bg-[#1a202b]', red = 'bg-[#6b2940]', wine = 'bg-[#562538]', blue = 'bg-[#223c7a]', teal = 'bg-[#14695f]';
const snapRows = [['out','值','val-d'],['sel','吸附','','g2'],['chk','钳制','','g3'],['in','值','val-d'],['num','增量','val-dot','g4','5.000']];
const setRows = [['out','几何数据','geo-o'],['in','几何数据','geo-o','g1'],['in','选中项','bool-dot'],['in','ID','int-d']];
const inRows = [['out','几何数据','geo-o'],['out','','none-o']];
const outRows = [['in','几何数据','geo-o'],['in','','none-o']];
const nodesA = [
  [34,391,'组输入',dark,inRows],[36,472,'编号',red,[['out','编号','int-d']]],[202,457,'吸附',blue,snapRows],
  [370,371,'设置ID',teal,setRows],[650,373,'组输出',dark,outRows]];
const nodesB = [
  [35,394,'组输入',dark,inRows],[36,457,'编号',red,[['out','编号','int-d']]],[168,446,'吸附',blue,snapRows],
  [341,378,'设置ID',teal,setRows],
  [344,481,'随机值',blue,[['out','值','val-d'],['sel','浮点','','g2'],['num','最小值','val-dot','','0.000'],['num','最大值','val-dot','','1.000'],['in','ID','int-d'],['num','随机种','int-dot','','0']]],
  [526,443,'预览器',wine,[['sel','自动','','g1'],['in','几何数据','geo-o'],['in','值','val-d']],true],
  [653,380,'组输出',dark,outRows]];

const geoA = 'M179 426 370 430M515 405.500 650 407.500';
const geoB = 'M150 421.500 341 424.500M456 405.500 653 407.500M456 405.500C490 408 496 487 526 489.500';
const nodeEditor = p => `
<section aria-label="几何节点编辑器" class="text-[7px] leading-none text-[#b9bdc2]">
  <div class="relative flex h-[15px] items-center bg-[#1a2832] pl-[5px] pr-[6px]">
    <button aria-label="编辑器类型" class="flex h-[12px] w-[18px] items-center justify-center rounded-[3px] bg-[#07090d]">${ic('mod')}${ic('chev', 'size-[6px]')}</button>
    ${pick('节点组类型', '修改器', 'ml-[4px] h-[12px] w-[40px]', 'pl-[4px]')}
    <nav class="ml-[7px] flex gap-[8px]"><button>视图</button><button>选择</button><button>添加</button><button>节点</button></nav>
    <div class="ml-[166px] flex h-[12px] items-center rounded-[3px] bg-[#07090d] pl-[3px] pr-[2px]">${ic('nodes')}${ic('chev', 'size-[6px]')}
      <input aria-label="节点组名称" value="Geometry Nodes.003" class="ml-[4px] w-[74px] bg-transparent outline-none">
      <span class="flex gap-[3px]">${tinyBtn('shield', '伪用户')}${tinyBtn('copy', '复制')}${tinyBtn('x', '断开')}</span></div>
    <button aria-label="固定" class="ml-[6px] text-[#8a9299]">${ic('pin')}</button>
    <div class="ml-auto flex items-center">
      ${tinyBtn('up', '上级', 'text-[#56606a]')}
      ${tinyBtn('magnet', '吸附', 'ml-[6px] text-[#8a9299]')}
      <span class="flex h-[12px] items-center rounded-[3px] bg-[#07090d] pr-[2px]">${ic('snap')}${ic('chev', 'size-[6px]')}</span>
      <span class="ml-[5px] flex h-[12px] items-center rounded-[3px] bg-[#07090d] pr-[3px]"><span class="rounded-[2px] bg-[#2f55a0] p-px text-[#c7d5f5]">${ic('overlay')}</span>${ic('chev', 'size-[7px]')}</span>
      <span class="ml-[12px] flex gap-[6px]">${tinyBtn('funnel', '筛选')}${tinyBtn('gear', '设置', 'text-white')}</span>
    </div>
  </div>
  <div class="relative h-[317px] overflow-hidden bg-[#121921] bg-[radial-gradient(#1a232d_1px,transparent_1px)] bg-[size:21px_21px]">
    <nav aria-label="路径" class="flex h-[24px] items-center bg-[#121921] pr-[2px]">
      ${ic('right', 'size-[6px]')}
      <a href="#" class="ml-[5px] flex items-center gap-[5px]">${ic('obj')}Suzanne.001</a>
      <span class="ml-[8px]">${ic('right', 'size-[7px]')}</span>
      <a href="#" class="ml-[5px] flex items-center gap-[5px]">${ic('mod')}GeometryNodes</a>
      <span class="ml-[8px]">${ic('right', 'size-[7px]')}</span>
      <a href="#" class="ml-[5px] flex items-center gap-[5px]">${ic('nodes')}Geometry Nodes.003</a>
      <span class="ml-auto">${ic('left', 'size-[6px]')}</span>
    </nav>
    ${p.nodes.map(n => node(p.S, n)).join('')}
    <svg class="pointer-events-none absolute left-0 top-0 h-[317px] w-[798px]" viewBox="11 323 798 317" fill="none">
      <path d="${p.geo}" stroke="#0b3f38" stroke-width="${p.S === big ? 4 : 3}"/>
      <path d="${p.geo}" stroke="#14c79b" stroke-width="2"/>
      <path d="${p.dash}" stroke="#8f9691" stroke-width="1" stroke-dasharray="7 3"/>
    </svg>
  </div>
</section>`;

const v2 = ['0.860','0.843','0.975','0.996','0.539','0.583','0.177','0.544','0.826','0.562','0.275','0.100','0.660','0.596','0.466','0.969','0.463','0.340','0.554','0.338','0.285'];
const five = i => i - i % 5;
const b = t => `<b class="font-bold">${t}</b>`;
const panels = [
  { file: 'Pasted image 20241001220556.png', head: 'flat', caption: '(1) Collection | Suzanne.001', state: '已解算', viewer: null, ids: five, cols: 2,
    S: big, nodes: nodesA, geo: geoA, dash: 'M180 506.500C190 508 192 562 202 565.500M347 491.500C355 489 362 475 370 472.500',
    marks: [[637,33,43,75],[637,106,43,63],[637,167,42,63],[637,228,42,60],[184,572,187,40]],
    note: ['ml-[224px] w-[353px] h-[77px]', `通过<b class="font-bold text-[#d39b7c]">吸附_Snap</b>将编号都吸附到${b(5)}的倍数上然后将他<br>设置为${b('ID')}值，可以看到，${b('ID')}属性的变化，这样你可<br>以通过${b('ID')}的值来分组进行一些控制。`] },
  { file: 'Pasted image 20241001221011.png', head: 'smoothA', caption: '(1) Collection | Suzanne.001 (预览器)', state: '查看器节点', viewer: v2, ids: i => i, cols: 3,
    S: small, nodes: nodesB, geo: geoB, dash: 'M151 484.500C158 486 161 530 168 532.500M459 508.500 526 506.500',
    marks: [[532,35,39,261],[672,34,44,263]],
    note: ['ml-[230px] w-[190px] h-[60px]', '这里看到，每个编号都有<br>一个随机值。'] },
  { file: 'Pasted image 20241001221122.png', head: 'smoothB', caption: '(1) Collection | Suzanne.001 (预览器)', state: '查看器节点', viewer: v2.map((_, i) => i === 20 ? v2[20] : v2[five(i)]), ids: five, cols: 3,
    S: small, nodes: nodesB, geo: geoB, dash: 'M151 484.500C158 486 161 530 168 532.500M459 508.500 526 506.500M283 473.500C303 473 321 459 341 458.500',
    marks: [[516,44,58,66],[515,108,58,59]],
    note: ['ml-[202px] w-[397px] h-[66px]', `当${b('ID')}变化后，相同${b('ID')}的随机值都相同，当然不接入设置${b('ID')}<br>将值接入随机值的${b('ID')}接口也是一样的。`] }];

document.getElementById('board').innerHTML = panels.map(p => `
<div class="relative min-w-0">
  <h2 class="h-[21px] pt-px font-['Open_Sans','Noto_Sans',sans-serif] text-[10px] leading-5 text-[#dfe1e5]">${p.file}</h2>
  <figure class="relative rounded-[3px] border border-[#666a72] bg-[#0d1218]">
    <div class="flex">${viewport(p)}${sheet(p)}</div>
    ${nodeEditor(p)}
    ${p.marks.map(([x, y, w, h]) => `<span class="pointer-events-none absolute rounded-[13px] border-2 border-[#cf1d13]" style="left:${x - 11}px;top:${y - 22}px;width:${w}px;height:${h}px"></span>`).join('')}
  </figure>
  <p class="${p.note[0]} -mt-px whitespace-nowrap rounded-[3px] border border-[#555963] px-[13px] pt-[10px] font-['Open_Sans','Noto_Sans_CJK_SC',sans-serif] text-[14px] leading-[17px] text-[#bd5c6b]">${p.note[1]}</p>
</div>`).join('');
</script>
</body>
</html>
